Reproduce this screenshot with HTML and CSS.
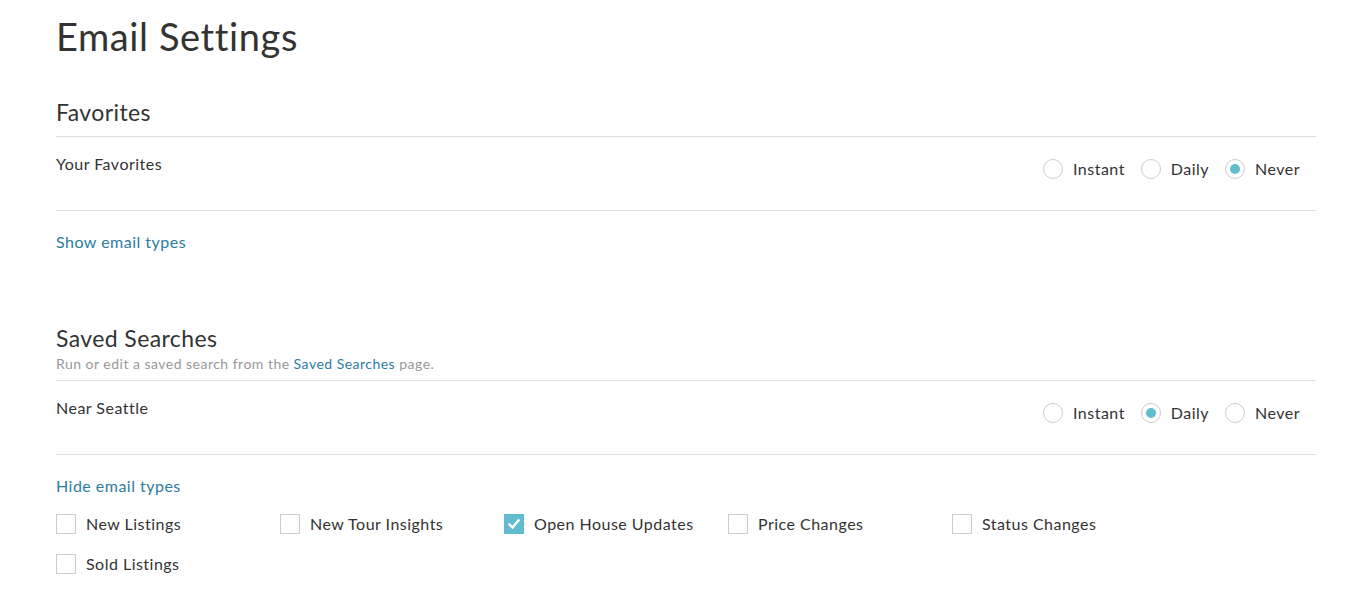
FILE: index.html
```html
<!DOCTYPE html>
<html lang="en">

<head>
    <meta charset="UTF-8">
    <title>Email Settings</title>
    <link rel="stylesheet" href="styles.css">
</head>

<body>
    <div class="page">
        <h1 class="title">Email Settings</h1>

        <section class="group favorites">
            <div class="group-head">
                <h2>Favorites</h2>
            </div>
            <div class="row">
                <div class="row-name">Your Favorites</div>
                <div class="radios">
                    <label class="radio"><span class="dot"></span>Instant</label>
                    <label class="radio"><span class="dot"></span>Daily</label>
                    <label class="radio"><span class="dot on"></span>Never</label>
                </div>
            </div>
            <a class="toggle" href="#">Show email types</a>
        </section>

        <section class="group searches">
            <div class="group-head">
                <h2>Saved Searches</h2>
                <p class="sub">Run or edit a saved search from the <a href="#">Saved Searches</a> page.</p>
            </div>
            <div class="row">
                <div class="row-name">Near Seattle</div>
                <div class="radios">
                    <label class="radio"><span class="dot"></span>Instant</label>
                    <label class="radio"><span class="dot on"></span>Daily</label>
                    <label class="radio"><span class="dot"></span>Never</label>
                </div>
            </div>
            <a class="toggle" href="#">Hide email types</a>
            <div class="types">
                <label class="check"><span class="box"></span>New Listings</label>
                <label class="check"><span class="box"></span>New Tour Insights</label>
                <label class="check"><span class="box on"><svg viewBox="0 0 20 20" width="20" height="20"><polyline points="5.5,10.5 8.5,13.5 14.5,6.5" fill="none" stroke="#fff" stroke-width="2.4" stroke-linecap="square"/></svg></span>Open House Updates</label>
                <label class="check"><span class="box"></span>Price Changes</label>
                <label class="check"><span class="box"></span>Status Changes</label>
                <label class="check"><span class="box"></span>Sold Listings</label>
            </div>
        </section>
    </div>
</body>

</html>
```

FILE: styles.css
```css
body {
    margin: 0;
    background: #fff;
    color: #333;
    font-family: Lato, "Open Sans", sans-serif;
    font-size: 16px;
    letter-spacing: 0.03em;
}

.page {
    padding: 13px 50px 0 56px;
}

.title {
    margin: 0;
    font-size: 38px;
    line-height: 46px;
    font-weight: 400;
    letter-spacing: 0.6px;
    color: #333;
}

.group-head {
    border-bottom: 1px solid #ddd;
}

.group-head h2 {
    margin: 0;
    font-size: 23px;
    line-height: 28px;
    font-weight: 400;
    letter-spacing: 0.4px;
}

.favorites {
    margin-top: 39px;
}

.favorites .group-head {
    padding-bottom: 10px;
}

.searches {
    margin-top: 70px;
}

.searches .group-head {
    padding-bottom: 6px;
}

.sub {
    margin: 2px 0 0;
    font-size: 14px;
    line-height: 20px;
    color: #999;
}

.sub a,
.toggle {
    color: #2d7c9f;
    text-decoration: none;
}

.row {
    display: flex;
    justify-content: space-between;
    align-items: flex-start;
    height: 74px;
    padding: 15px 16px 0 0;
    box-sizing: border-box;
    border-bottom: 1px solid #ddd;
}

.row-name {
    line-height: 24px;
}

.radios {
    display: flex;
    gap: 16px;
    margin-top: 7px;
}

.radio {
    display: flex;
    align-items: center;
    gap: 10px;
    line-height: 20px;
}

.dot {
    width: 20px;
    height: 20px;
    box-sizing: border-box;
    border: 1px solid #ccc;
    border-radius: 50%;
    position: relative;
}

.dot.on::after {
    content: "";
    position: absolute;
    top: 4px;
    left: 4px;
    width: 10px;
    height: 10px;
    border-radius: 50%;
    background: #5fbdcd;
}

.toggle {
    display: block;
    width: max-content;
    margin-top: 19px;
    line-height: 24px;
}

.types {
    display: grid;
    grid-template-columns: repeat(5, 224px);
    row-gap: 16px;
    margin-top: 14px;
}

.check {
    display: flex;
    align-items: center;
    gap: 10px;
    line-height: 24px;
}

.box {
    width: 20px;
    height: 20px;
    box-sizing: border-box;
    border: 1px solid #ccc;
    display: flex;
}

.box.on {
    background: #5fbdcd;
    border-color: #5fbdcd;
}

.box.on svg {
    margin: -1px;
}
```
